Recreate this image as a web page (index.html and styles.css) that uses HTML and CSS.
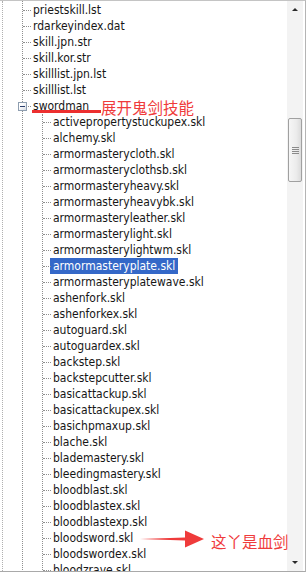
FILE: index.html
```html
<!DOCTYPE html>
<html lang="zh-CN">
<head>
  <meta charset="UTF-8">
  <meta name="viewport" content="width=device-width, initial-scale=1.0">
  <title>swordman</title>
  <link rel="stylesheet" href="styles.css">
</head>
<body>
  <div class="frame">
    <div class="tree">
      <ul class="branch top">
        <li><span class="label">priestskill.lst</span></li>
        <li><span class="label">rdarkeyindex.dat</span></li>
        <li><span class="label">skill.jpn.str</span></li>
        <li><span class="label">skill.kor.str</span></li>
        <li><span class="label">skilllist.jpn.lst</span></li>
        <li><span class="label">skilllist.lst</span></li>
        <li class="open">
          <span class="toggle"></span><span class="label">swordman</span>
          <ul class="branch">
            <li><span class="label">activepropertystuckupex.skl</span></li>
            <li><span class="label">alchemy.skl</span></li>
            <li><span class="label">armormasterycloth.skl</span></li>
            <li><span class="label">armormasteryclothsb.skl</span></li>
            <li><span class="label">armormasteryheavy.skl</span></li>
            <li><span class="label">armormasteryheavybk.skl</span></li>
            <li><span class="label">armormasteryleather.skl</span></li>
            <li><span class="label">armormasterylight.skl</span></li>
            <li><span class="label">armormasterylightwm.skl</span></li>
            <li><span class="label selected">armormasteryplate.skl</span></li>
            <li><span class="label">armormasteryplatewave.skl</span></li>
            <li><span class="label">ashenfork.skl</span></li>
            <li><span class="label">ashenforkex.skl</span></li>
            <li><span class="label">autoguard.skl</span></li>
            <li><span class="label">autoguardex.skl</span></li>
            <li><span class="label">backstep.skl</span></li>
            <li><span class="label">backstepcutter.skl</span></li>
            <li><span class="label">basicattackup.skl</span></li>
            <li><span class="label">basicattackupex.skl</span></li>
            <li><span class="label">basichpmaxup.skl</span></li>
            <li><span class="label">blache.skl</span></li>
            <li><span class="label">blademastery.skl</span></li>
            <li><span class="label">bleedingmastery.skl</span></li>
            <li><span class="label">bloodblast.skl</span></li>
            <li><span class="label">bloodblastex.skl</span></li>
            <li><span class="label">bloodblastexp.skl</span></li>
            <li><span class="label">bloodsword.skl</span></li>
            <li><span class="label">bloodswordex.skl</span></li>
            <li><span class="label">bloodzrave.skl</span></li>
          </ul>
        </li>
      </ul>
    </div>

    <div class="scrollbar">
      <div class="arrow up"></div>
      <div class="track">
        <div class="thumb"><span class="grip"></span></div>
      </div>
      <div class="arrow down"></div>
    </div>

    <!-- 标注 -->
    <div class="mark-line"></div>
    <div class="mark-text note-open">展开鬼剑技能</div>
    <svg class="mark-arrow" width="66" height="20" viewBox="0 0 66 20">
      <polygon points="0,10 45,8.6 45,1.5 64,10 45,18.5 45,11.4" fill="#ef3b3b"/>
    </svg>
    <div class="mark-text note-blood">这丫是血剑</div>
  </div>
</body>
</html>
```

FILE: styles.css
```css
body {
  margin: 0;
  background: #ffffff;
  font-family: "DejaVu Sans Condensed", "DejaVu Sans", sans-serif;
}

.frame {
  position: relative;
  display: flex;
  width: 306px;
  height: 572px;
  box-sizing: border-box;
  border-top: 1px solid #c4c4c4;
  border-bottom: 1px solid #a9a9a9;
  border-right: 1px solid #b4b4b4;
  overflow: hidden;
  background: #ffffff;
}

/* 树形列表 */
.tree {
  flex: 1;
  margin-left: 2px;
  border-left: 1px dotted #b0b0b0;
  overflow: hidden;
}

.branch {
  list-style: none;
  margin: 0;
  padding: 0;
  border-left: 1px dotted #8f8f8f;
  font-size: 12px;
  line-height: 16px;
}

.branch.top {
  margin-left: 19px;
  padding-top: 1px;
}

.branch .branch {
  margin-left: 12px;
}

.branch li {
  position: relative;
  padding-left: 7px;
}

.branch li::before {
  content: "";
  position: absolute;
  left: 0;
  top: 8px;
  width: 8px;
  border-top: 1px dotted #8f8f8f;
}

.label {
  display: inline-block;
  vertical-align: top;
  height: 16px;
  padding: 0 3px;
  color: #161616;
  white-space: nowrap;
}

.label.selected {
  background: #3468c8;
  color: #ffffff;
}

.toggle {
  position: absolute;
  left: -5px;
  top: 4px;
  width: 9px;
  height: 9px;
  box-sizing: border-box;
  border: 1px solid #8e9eb0;
  background: linear-gradient(135deg, #ffffff 30%, #d8dde5);
  z-index: 1;
}

.toggle::after {
  content: "";
  position: absolute;
  left: 1px;
  top: 3px;
  width: 5px;
  height: 1px;
  background: #2b3f6c;
}

/* 滚动条 */
.scrollbar {
  display: flex;
  flex-direction: column;
  width: 16px;
  margin-right: 2px;
  background-color: #f3f3f3;
  background-image: radial-gradient(#e2e2e2 0.6px, transparent 0.7px);
  background-size: 2px 2px;
}

.arrow {
  height: 17px;
  display: flex;
  align-items: center;
  justify-content: center;
}

.arrow::after {
  content: "";
  border-left: 3px solid transparent;
  border-right: 3px solid transparent;
}

.arrow.up::after {
  border-bottom: 3px solid #2a2a2a;
}

.arrow.down::after {
  border-top: 3px solid #2a2a2a;
}

.track {
  flex: 1;
  padding-top: 100px;
}

.thumb {
  display: flex;
  align-items: center;
  justify-content: center;
  height: 64px;
  margin: 0 1px;
  box-sizing: border-box;
  border: 1px solid #a0a0a0;
  border-radius: 2px;
  background: linear-gradient(90deg, #f6f6f6, #ececec 60%, #dcdcdc);
}

.grip {
  width: 7px;
  height: 7px;
  background: repeating-linear-gradient(180deg, #8a8a8a 0 1px, transparent 1px 2px);
}

/* 红色标注 */
.mark-line {
  position: absolute;
  left: 32px;
  top: 109px;
  width: 69px;
  height: 3px;
  background: #ec2f2f;
}

.mark-text {
  position: absolute;
  font-family: "Noto Sans CJK SC", sans-serif;
  font-size: 15.5px;
  line-height: 16px;
  color: #ef3b3b;
  white-space: nowrap;
}

.note-open {
  left: 101px;
  top: 98px;
}

.note-blood {
  left: 211px;
  top: 532px;
}

.mark-arrow {
  position: absolute;
  left: 140px;
  top: 528px;
}
```
